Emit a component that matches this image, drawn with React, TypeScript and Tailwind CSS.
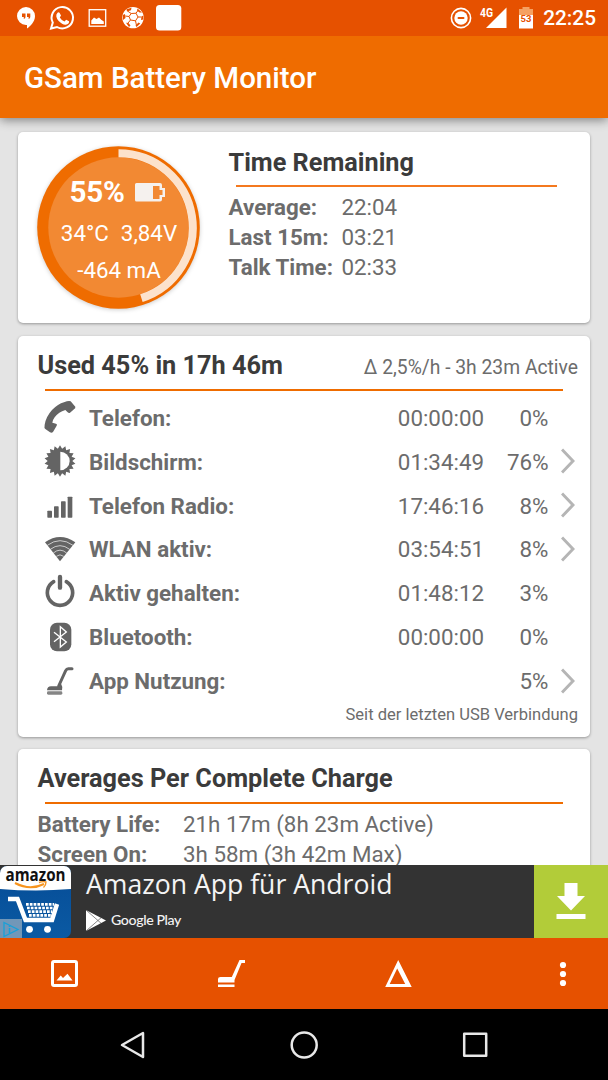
import type { ReactNode } from "react";

const sunPoints = Array.from({ length: 36 }, (_, i) => {
  const r = i % 2 === 0 ? 47 : 37;
  const a = (i * Math.PI) / 18;
  return `${(48 + r * Math.sin(a)).toFixed(1)},${(45 - r * Math.cos(a)).toFixed(1)}`;
}).join(" ");

function RowIcon({ children }: { children: ReactNode }) {
  return (
    <svg viewBox="0 0 96 96" className="h-8 w-8 shrink-0 overflow-visible" fill="#646464">
      {children}
    </svg>
  );
}

const PhoneIcon = (
  <RowIcon>
    <path d="M60 1 Q74 -5 80 -2 L94 14 Q95 19 90 22 L78 32 Q75 35 71 31 L64 24 Q44 30 32 46 Q26 54 25 62 L36 65 Q41 67 38 71 L27 90 Q23 94 18 91 L4 81 Q0 78 2 68 Q6 44 24 24 Q42 6 60 1 Z" />
  </RowIcon>
);
const ScreenIcon = (
  <RowIcon>
    <polygon points={sunPoints} />
    <path d="M49 17 A28 28 0 0 1 49 73 Z" fill="#fff" />
  </RowIcon>
);
const RadioIcon = (
  <RowIcon>
    <rect x="10" y="62" width="14" height="21" rx="2" />
    <rect x="30" y="49" width="14" height="34" rx="2" />
    <rect x="51" y="34" width="14" height="49" rx="2" />
    <rect x="71" y="20" width="14" height="63" rx="2" />
  </RowIcon>
);
const WifiIcon = (
  <RowIcon>
    <path d="M48 82 L3 25 Q48 -7 94 25 Z" />
    <path d="M10 34 Q48 6 87 34 M19 46 Q48 24 77 46 M28 57 Q48 40 68 57 M37 67 Q48 58 59 67" fill="none" stroke="#fff" strokeWidth="2" />
  </RowIcon>
);
const PowerIcon = (
  <RowIcon>
    <path d="M29 11 A38 38 0 1 0 67 11" fill="none" stroke="#646464" strokeWidth="11" strokeLinecap="round" />
    <path d="M48 -3 V29" stroke="#646464" strokeWidth="13" strokeLinecap="round" />
  </RowIcon>
);
const BluetoothIcon = (
  <RowIcon>
    <rect x="18" y="2" width="64" height="86" rx="21" />
    <path d="M30 31 L67 60 L49 75 V14 L67 30 L30 59" fill="none" stroke="#fff" strokeWidth="4" />
  </RowIcon>
);
const AppIcon = (
  <RowIcon>
    <path d="M84 8 H73 Q68 8 65 14 L44 60" fill="none" stroke="#646464" strokeWidth="9" strokeLinecap="round" />
    <path d="M9 73 Q10 61 21 61 H44 L50 50 Q57 62 54 73 Z" />
    <rect x="9" y="76" width="46" height="10" rx="4" fill="#858585" />
  </RowIcon>
);

type Usage = { icon: ReactNode; name: string; time: string; pct: string; more?: boolean };

const usage: Usage[] = [
  { icon: PhoneIcon, name: "Telefon:", time: "00:00:00", pct: "0%" },
  { icon: ScreenIcon, name: "Bildschirm:", time: "01:34:49", pct: "76%", more: true },
  { icon: RadioIcon, name: "Telefon Radio:", time: "17:46:16", pct: "8%", more: true },
  { icon: WifiIcon, name: "WLAN aktiv:", time: "03:54:51", pct: "8%", more: true },
  { icon: PowerIcon, name: "Aktiv gehalten:", time: "01:48:12", pct: "3%" },
  { icon: BluetoothIcon, name: "Bluetooth:", time: "00:00:00", pct: "0%" },
  { icon: AppIcon, name: "App Nutzung:", time: "", pct: "5%", more: true },
];

const remaining = [
  ["Average:", "22:04"],
  ["Last 15m:", "03:21"],
  ["Talk Time:", "02:33"],
];

const averages = [
  ["Battery Life:", "21h 17m (8h 23m Active)"],
  ["Screen On:", "3h 58m (3h 42m Max)"],
];

function Card({ className, children }: { className: string; children: ReactNode }) {
  return (
    <section className={`mx-[18px] rounded-[5px] bg-white shadow-[0_1px_3px_rgba(0,0,0,0.35)] ${className}`}>
      {children}
    </section>
  );
}

function StatusBar() {
  return (
    <div className="flex h-[35.5px] items-center justify-between bg-[#e65100] pr-3 pl-4">
      <svg viewBox="0 0 170 36" className="h-9 w-[170px]" fill="#fff">
        <path d="M10 7 A9 9 0 0 1 19 16 C19 22 14 26.500 11 28.500 V25 H10 A9 9 0 0 1 10 7 Z" />
        <path d="M6 13.500 H9.500 V17 Q9.500 18.500 7.800 19 V17 H6 Z M11 13.500 H14.300 V17 Q14.300 18.500 12.600 19 V17 H11 Z" fill="#e65100" />
        <path d="M35 28.500 L36.800 22.600 A10.700 10.700 0 1 1 41 27 Z" fill="none" stroke="#fff" strokeWidth="2" />
        <path d="M41.500 12.700 Q42.500 11.800 43.500 12.800 L45 15.500 L43.800 17.500 Q45.500 20.500 48.500 21.500 L50.200 19.800 L53 21.200 Q53.500 23.500 50.500 24.500 Q47 25.500 42.700 21 Q38.500 16 41.500 12.700 Z" />
        <rect x="73.200" y="9.700" width="16.500" height="16.500" fill="none" stroke="#fff" strokeWidth="1.300" />
        <path d="M75.300 24 V20.500 L78 17.500 L80.500 19 L83 17.500 L85.500 20 L87.800 21.500 V24 Z" />
        <circle cx="117" cy="17.600" r="10.700" />
        <g fill="#e65100">
          <path d="M110.500 9.300 L115.500 7.700 L115 10.200 L111 11.500 Z M121.500 8.600 L126 12.500 L123.500 12.500 L121 10.500 Z M106.800 15 L109 14 L109.500 18 L107 20 Z M110 22.800 L112.500 23 L114.500 25.500 L113 27 Z M119.500 25.500 L122.500 22.500 L124.300 23.500 L120.500 27 Z M125.500 16.500 L127.300 15.500 V19.500 L125 20 Z" />
        </g>
        <path d="M115.200 13.500 L120 13.200 L122 17 L119.500 20.800 L114.500 20 L113 16.500 Z M111.500 11 L115.200 13.500 M120 13.200 L122 10.500 M122 17 L125.500 17 M119.500 20.800 L120.500 25.500 M114.500 20 L112 23 M109.300 16 L113 16.500" fill="none" stroke="#e65100" strokeWidth="1" />
        <rect x="140" y="5" width="25.300" height="25.500" rx="3.500" />
      </svg>
      <div className="flex items-center">
        <svg viewBox="0 0 86 36" className="h-9 w-[86px]" fill="#fff">
          <circle cx="11" cy="18" r="9.600" fill="none" stroke="#fff" strokeWidth="1.600" />
          <circle cx="11" cy="18" r="6.700" />
          <rect x="7.500" y="17" width="7" height="2" rx="1" fill="#e65100" />
          <text x="30" y="17" className="font-['Roboto',sans-serif] text-[12.500px] font-bold" textLength="13" lengthAdjust="spacingAndGlyphs">4G</text>
          <path d="M56.500 7.500 V28 H36 Z" />
          <path d="M69 9 H72.500 V7 H79.500 V9 H83 V16 H69 Z" fill="#f5a162" />
          <rect x="69" y="15" width="14" height="13.500" />
          <text x="70.600" y="21.500" fill="#e65100" className="font-['Roboto',sans-serif] text-[9.500px] font-bold">53</text>
        </svg>
        <span className="ml-[7px] pt-[2px] text-[20.800px] font-medium text-white">22:25</span>
      </div>
    </div>
  );
}

function Gauge() {
  return (
    <div className="relative ml-[-0.500px] h-[163px] w-[163px] shrink-0">
      <svg viewBox="0 0 163 163" className="absolute inset-0 overflow-visible drop-shadow-[0_1px_2px_rgba(0,0,0,0.2)]">
        <circle cx="81.500" cy="81.500" r="81.300" fill="#ef6c00" />
        <circle cx="81.500" cy="81.500" r="70.200" fill="#f28933" />
        <path d="M81.500 7.300 A74.200 74.200 0 0 1 104.400 152.100" fill="none" stroke="#fce2cc" strokeWidth="8" />
      </svg>
      <div className="relative flex flex-col items-center pt-[26px] pl-px text-[22.350px] text-white">
        <div className="flex h-[40px] items-center gap-[11px] pr-[3px]">
          <span className="text-[29.600px] font-bold tracking-[-0.300px]">55%</span>
          <svg viewBox="0 0 30 19" className="h-[19px] w-[30px]">
            <path d="M1.500 0 H25 Q27 0 27 2 V5 H30 V14 H27 V16.500 Q27 18.500 25 18.500 H1.500 Q0 18.500 0 17 V1.500 Q0 0 1.500 0 Z" fill="#f5f1ee" />
            <path d="M18 3 H24.500 V7 H27.500 V12 H24.500 V16 H18 Z" fill="#f28933" />
          </svg>
        </div>
        <div className="flex h-[43px] items-center gap-3"><span>34°C</span><span>3,84V</span></div>
        <div className="flex h-[32px] items-center">-464 mA</div>
      </div>
    </div>
  );
}

function AdBanner() {
  return (
    <div className="flex h-[73.500px] shrink-0 bg-[#333]">
      <svg viewBox="0 0 72 74" className="h-[74px] w-[72px] shrink-0">
        <defs>
          <clipPath id="tile"><rect x="0" y="1" width="71" height="72" rx="7" /></clipPath>
          <linearGradient id="blue" x1="0" y1="0" x2="0" y2="1"><stop stopColor="#1565a9" /><stop offset="0.300" stopColor="#07509a" /><stop offset="1" stopColor="#0b5aa3" /></linearGradient>
        </defs>
        <g clipPath="url(#tile)">
          <rect width="72" height="74" fill="url(#blue)" />
          <path d="M0 0 H72 V24 Q36 27 0 24 Z" fill="#fff" />
        </g>
        <text x="5.500" y="16" textLength="60" lengthAdjust="spacingAndGlyphs" className="font-['Open_Sans',sans-serif] text-[18.500px] font-bold" fill="#111">amazon</text>
        <path d="M15 18 Q30 26 44 19" fill="none" stroke="#f7941d" strokeWidth="2" />
        <path d="M39 17.500 Q43 16 46 17 Q46 20.500 43.500 22.500" fill="none" stroke="#f7941d" strokeWidth="1.400" />
        <path d="M8 34 H17.500 L25.500 55 H52 L57 39" fill="none" stroke="#fff" strokeWidth="4.500" />
        <path d="M26 39.300 H54 M27 43 H53 M28 46.700 H52 M29 50.400 H51" stroke="#fff" strokeWidth="2.700" strokeDasharray="2.700 1.100" />
        <circle cx="29.500" cy="64.300" r="3.400" fill="#fff" />
        <circle cx="47.500" cy="64.300" r="3.400" fill="#fff" />
        <rect x="0" y="54" width="22" height="20" fill="#7d9fba" fillOpacity="0.900" />
        <path d="M4 57.500 L18 64.500 L4 71.500 Z" fill="none" stroke="#18a0d8" strokeWidth="1.300" />
        <path d="M9.500 63 V68 M9.500 60.500 V62" stroke="#18a0d8" strokeWidth="1.500" />
      </svg>
      <div className="flex flex-1 flex-col pl-[14px] text-[#f4f4f4]">
        <div className="h-[40px] font-['Open_Sans',sans-serif] text-[26.600px] leading-[39px] whitespace-nowrap">Amazon App für Android</div>
        <div className="flex h-[31px] items-center gap-[5px]">
          <svg viewBox="0 0 20 21" className="h-[21px] w-5">
            <path d="M0 0 L20 10.500 L0 21 Z" fill="#fff" />
            <path d="M0 0 L15 13.200 M0 21 L15 7.800" stroke="#555" strokeWidth="0.700" />
          </svg>
          <span className="font-['Lato',sans-serif] text-[14.200px] font-medium tracking-[-0.400px]">Google Play</span>
        </div>
      </div>
      <div className="flex w-[74.500px] items-center justify-center bg-[#b2cc39]">
        <svg viewBox="0 0 30 37" className="h-[37px] w-[30px]" fill="#fff">
          <path d="M8.500 0 H21.500 V13 H29 L15 27.500 L1 13 H8.500 Z" />
          <rect x="0.500" y="31" width="29" height="5" />
        </svg>
      </div>
    </div>
  );
}

function ActionBar() {
  return (
    <div className="flex h-[71px] shrink-0 items-center bg-[#e65100] pl-[51.400px]">
      <svg viewBox="0 0 27 27" className="h-[27px] w-[27px]">
        <rect x="1.500" y="1.500" width="24" height="24" rx="1.500" fill="none" stroke="#fff" strokeWidth="3" />
        <path d="M5.500 20.500 L9.700 15.500 L12 18 L16.500 13.800 L21.500 20.500 Z" fill="#fff" />
      </svg>
      <svg viewBox="0 0 27 27" className="ml-[139.800px] h-[27px] w-[27px]" fill="#fff">
        <path d="M21.500 0 H27 V3 H23.500 L16.500 20 V22.500 H0 V19 Q0 17 2.500 17 H13.800 Z" />
        <rect x="0" y="24.500" width="16.500" height="2.500" />
      </svg>
      <svg viewBox="0 0 27 27" className="ml-[140px] h-[27px] w-[27px]">
        <path fillRule="evenodd" d="M13.200 0 L26.700 27 H0.200 Z M12.200 8.500 L4.700 24 H20.200 Z" fill="#fff" />
      </svg>
      <svg viewBox="0 0 8 26" className="ml-[147.300px] h-[26px] w-2" fill="#fff">
        <circle cx="4" cy="4" r="3.100" /><circle cx="4" cy="13" r="3.100" /><circle cx="4" cy="22" r="3.100" />
      </svg>
    </div>
  );
}

function NavBar() {
  return (
    <div className="flex h-[71px] shrink-0 items-center justify-center gap-[144px] bg-black pr-px">
      <svg viewBox="0 0 27 28" className="h-7 w-[27px]" fill="none" stroke="#e8e8e8" strokeWidth="2.500" strokeLinejoin="round"><path d="M24 2 V26 L3 14 Z" /></svg>
      <svg viewBox="0 0 28 28" className="h-7 w-7" fill="none" stroke="#e8e8e8" strokeWidth="2.500"><circle cx="14.200" cy="14" r="12.500" /></svg>
      <svg viewBox="0 0 26 26" className="h-[26px] w-[26px]" fill="none" stroke="#e8e8e8" strokeWidth="2.500" strokeLinejoin="round"><rect x="2.200" y="1.700" width="22" height="22" /></svg>
    </div>
  );
}

export default function App() {
  return (
    <div className="flex h-[1080px] w-[608px] flex-col overflow-hidden bg-[#e4e4e4] font-['Roboto',sans-serif] text-[22.350px] text-[#6c6c6c]">
      <header className="z-10 shrink-0 shadow-[0_2px_10px_rgba(0,0,0,0.45)]">
        <StatusBar />
        <div className="flex h-[82.500px] items-center bg-[#ef6c00] pl-6 pt-[2px] text-[29.500px] font-medium text-white">
          GSam Battery Monitor
        </div>
      </header>

      <main className="min-h-0 flex-1 overflow-hidden pt-[13.500px]">
        <Card className="flex h-[191.500px] pt-[14.500px] pl-[19.500px]">
          <Gauge />
          <div className="ml-[28.500px] flex-1">
            <h2 className="h-[31px] pt-px text-[25.250px] leading-[31px] font-bold text-[#3b3b3b]">Time Remaining</h2>
            <div className="mt-[8px] ml-[7.500px] h-0.5 w-[321px] bg-[#f4791f]" />
            <div className="mt-[5.500px]">
              {remaining.map(([label, value]) => (
                <div key={label} className="flex h-[30px] items-center">
                  <span className="w-[113px] font-bold">{label}</span>
                  <span>{value}</span>
                </div>
              ))}
            </div>
          </div>
        </Card>

        <Card className="mt-[12.500px] h-[401.500px]">
          <div className="flex h-[53px] items-center justify-between pt-[8px] pr-3 pl-[19.500px]">
            <h2 className="text-[25.300px] font-bold text-[#3b3b3b]">Used 45% in 17h 46m</h2>
            <span className="pt-[5px] text-[19.300px]">Δ 2,5%/h - 3h 23m Active</span>
          </div>
          <div className="mx-[27px] h-0.5 bg-[#ef6c00]" />
          <div className="pt-[6px]">
            {usage.map((u) => (
              <div key={u.name} className="flex h-[43.930px] items-center pl-[25.500px]">
                {u.icon}
                <span className="ml-[13.500px] flex-1 font-bold">{u.name}</span>
                <span>{u.time}</span>
                <span className="w-[64.500px] text-right">{u.pct}</span>
                <span className="flex w-[41.500px] justify-center pr-[3.500px]">
                  {u.more && (
                    <svg viewBox="0 0 14 26" className="mt-[-2px] h-[26px] w-[14px]" fill="none" stroke="#b5b5b5" strokeWidth="3">
                      <path d="M1 1.500 L12 13 L1 24.500" />
                    </svg>
                  )}
                </span>
              </div>
            ))}
          </div>
          <div className="mt-[1.300px] pr-3 text-right text-[16.550px] leading-[20px]">Seit der letzten USB Verbindung</div>
        </Card>

        <Card className="mt-[12px] h-[191px]">
          <h2 className="h-[53px] pt-[7px] pl-[19.500px] text-[25.300px] leading-[46px] font-bold text-[#3b3b3b]">Averages Per Complete Charge</h2>
          <div className="mx-[27px] h-0.5 bg-[#ef6c00]" />
          <div className="pt-[5.500px] pl-[19.500px]">
            {averages.map(([label, value]) => (
              <div key={label} className="flex h-[30px] items-center">
                <span className="w-[145.500px] font-bold">{label}</span>
                <span>{value}</span>
              </div>
            ))}
          </div>
        </Card>
      </main>

      <AdBanner />
      <ActionBar />
      <NavBar />
    </div>
  );
}
